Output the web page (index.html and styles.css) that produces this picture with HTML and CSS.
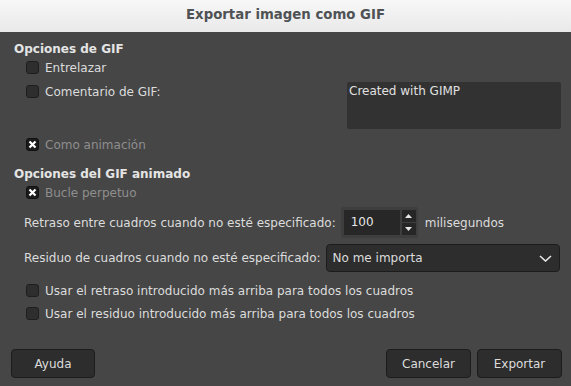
FILE: index.html
```html
<!DOCTYPE html>
<html>
<head>
  <title>Exportar imagen como GIF</title>
  <link rel="stylesheet" href="styles.css">
</head>
<body>
  <div class="titlebar">Exportar imagen como GIF</div>

  <div class="content">
    <div class="section-title first">Opciones de GIF</div>

    <div class="check row-entrelazar">
      <span class="box"></span><span class="label">Entrelazar</span>
    </div>

    <div class="comment-row">
      <div class="check">
        <span class="box"></span><span class="label">Comentario de GIF:</span>
      </div>
      <div class="comment-text">Created with GIMP</div>
    </div>

    <div class="check checked disabled row-anim">
      <span class="box"><svg width="9" height="9" viewBox="0 0 9 9"><path d="M1.5 1.5 L7.5 7.5 M7.5 1.5 L1.5 7.5" stroke="#fff" stroke-width="2.2"/></svg></span><span class="label">Como animación</span>
    </div>

    <div class="section-title second">Opciones del GIF animado</div>

    <div class="check checked disabled row-loop">
      <span class="box"><svg width="9" height="9" viewBox="0 0 9 9"><path d="M1.5 1.5 L7.5 7.5 M7.5 1.5 L1.5 7.5" stroke="#fff" stroke-width="2.2"/></svg></span><span class="label">Bucle perpetuo</span>
    </div>

    <div class="field-row row-delay">
      <span class="field-label">Retraso entre cuadros cuando no esté especificado:</span>
      <div class="spin">
        <div class="spin-entry">100</div>
        <div class="spin-buttons">
          <div class="spin-btn"><svg width="7" height="4" viewBox="0 0 7 4"><path d="M0 4 L3.5 0 L7 4 Z" fill="#e6e6e6"/></svg></div>
          <div class="spin-btn"><svg width="7" height="4" viewBox="0 0 7 4"><path d="M0 0 L3.5 4 L7 0 Z" fill="#e6e6e6"/></svg></div>
        </div>
      </div>
      <span class="unit">milisegundos</span>
    </div>

    <div class="field-row row-dispose">
      <span class="field-label">Residuo de cuadros cuando no esté especificado:</span>
      <div class="combo">
        <span>No me importa</span>
        <svg width="13" height="7" viewBox="0 0 13 7"><path d="M1 1 L6.5 6 L12 1" fill="none" stroke="#e6e6e6" stroke-width="1.6"/></svg>
      </div>
    </div>

    <div class="check indent row-usedelay">
      <span class="box"></span><span class="label">Usar el retraso introducido más arriba para todos los cuadros</span>
    </div>

    <div class="check indent row-usedispose">
      <span class="box"></span><span class="label">Usar el residuo introducido más arriba para todos los cuadros</span>
    </div>
  </div>

  <div class="actions">
    <button class="btn help">Ayuda</button>
    <div class="spacer"></div>
    <button class="btn">Cancelar</button>
    <button class="btn">Exportar</button>
  </div>
</body>
</html>
```

FILE: styles.css
```css
body{
  margin: 0;
  width: 571px;
  height: 386px;
  overflow: hidden;
  background-color: #464646;
  font-family: "DejaVu Sans", sans-serif;
  font-size: 12px;
  color: #dcdcdc;
}

.titlebar{
  height: 32px;
  line-height: 30px;
  text-align: center;
  font-weight: bold;
  font-size: 13.3px;
  color: #4f5255;
  background: linear-gradient(#f7f7f7, #e9e9e9);
}

.content{
  display: flex;
  flex-direction: column;
  padding-left: 14px;
  padding-right: 10px;
}

.section-title{
  font-weight: bold;
  line-height: 14px;
  color: #e4e4e4;
}
.section-title.first{
  margin-top: 10px;
}
.section-title.second{
  margin-top: 16px;
}

/* checkboxes */
.check{
  display: flex;
  align-items: center;
  height: 13px;
  padding-left: 12px;
  white-space: nowrap;
}
.check .box{
  width: 11px;
  height: 11px;
  border: 1px solid #1e1e1e;
  border-radius: 3px;
  background-color: #2e2e2e;
  margin-right: 6px;
  flex: none;
  display: flex;
  align-items: center;
  justify-content: center;
}
.check.checked .box{
  background-color: #1b1b1b;
  border-color: #111;
}
.check .label{
  line-height: 14px;
}
.check.disabled .label{
  color: #8e8e8e;
}

.row-entrelazar{
  margin-top: 5px;
}

.comment-row{
  display: flex;
  justify-content: space-between;
  margin-top: 8px;
}
.comment-row .check{
  margin-top: 3px;
}
.comment-text{
  width: 214px;
  height: 47px;
  box-sizing: border-box;
  background-color: #323232;
  border-radius: 2px;
  padding: 2px 0 0 2px;
  line-height: 14px;
  color: #e0e0e0;
}

.row-anim{
  margin-top: 9px;
}
.row-loop{
  margin-top: 5px;
}

/* spin + combo rows */
.field-row{
  display: flex;
  align-items: center;
  padding-left: 10px;
  white-space: nowrap;
}
.field-label{
  margin-right: 5px;
}
.row-delay{
  margin-top: 8px;
  height: 31px;
}
.row-dispose{
  margin-top: 6px;
  height: 28px;
}
.row-dispose .field-label{
  margin-right: 5px;
}

.spin{
  display: flex;
  flex: none;
  padding: 3px 2px 3px 3px;
  background-color: #3e3e3e;
  border-radius: 2px;
  box-sizing: border-box;
  height: 31px;
}
.spin-entry{
  width: 49px;
  background-color: #272727;
  padding-left: 7px;
  line-height: 25px;
  color: #e6e6e6;
  margin-right: 2px;
}
.spin-buttons{
  display: flex;
  flex-direction: column;
  gap: 1px;
}
.spin-btn{
  width: 14px;
  flex: 1;
  background-color: #262626;
  display: flex;
  align-items: center;
  justify-content: center;
}
.unit{
  margin-left: 7px;
}

.combo{
  display: flex;
  flex: none;
  align-items: center;
  justify-content: space-between;
  width: 234px;
  height: 28px;
  box-sizing: border-box;
  border: 1px solid #1c1c1c;
  border-radius: 4px;
  background-color: #2d2d2d;
  padding: 0 7px 0 6px;
}

.row-usedelay{
  margin-top: 12px;
}
.row-usedispose{
  margin-top: 10px;
}

/* dialog buttons */
.actions{
  display: flex;
  margin-top: 29px;
  padding: 0 9px 0 11px;
}
.spacer{
  flex: 1;
}
.btn{
  font-family: "DejaVu Sans", sans-serif;
  font-size: 12px;
  color: #dcdcdc;
  background-color: #2d2d2d;
  border: 1px solid #1c1c1c;
  border-radius: 4px;
  height: 29px;
  width: 85px;
  margin-left: 6px;
  padding: 0;
}
.btn.help{
  width: 84px;
  margin-left: 0;
}
```
